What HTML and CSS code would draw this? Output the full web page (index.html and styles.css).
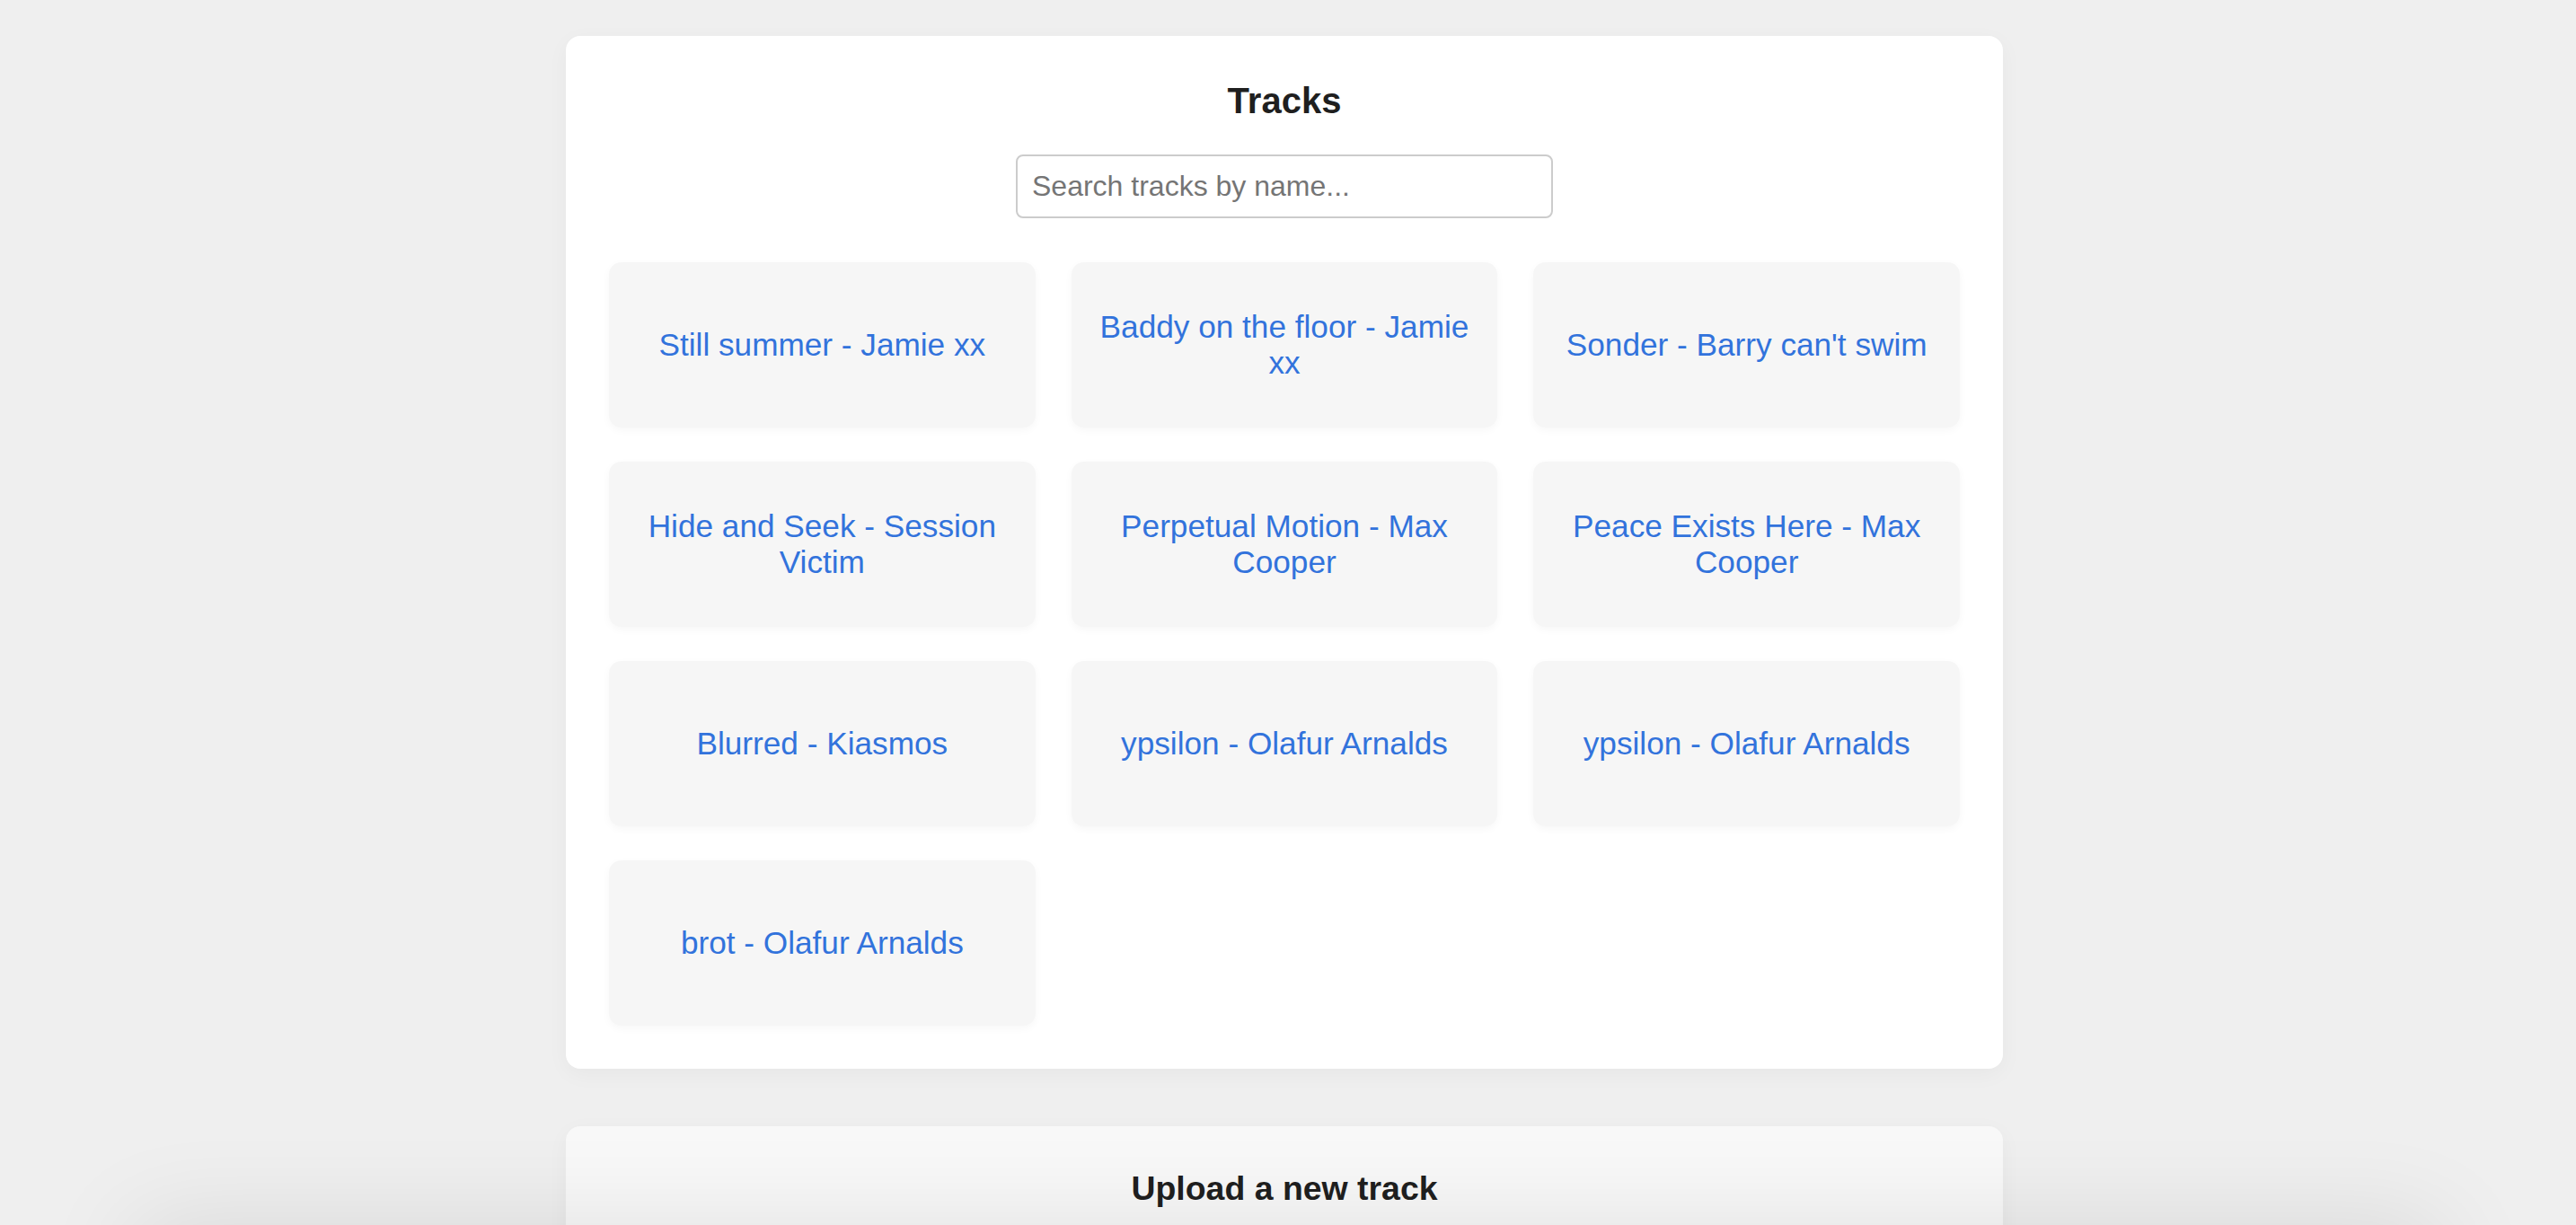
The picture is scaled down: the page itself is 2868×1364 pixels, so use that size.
FILE: index.html
```html
<!DOCTYPE html>
<html lang="en">
<head>
<meta charset="utf-8">
<title>Tracks</title>
<link rel="stylesheet" href="styles.css">
</head>
<body>
<main class="page">
  <section class="panel">
    <h2 class="panel-title">Tracks</h2>
    <div class="search-row">
      <input class="search" type="text" placeholder="Search tracks by name...">
    </div>
    <div class="track-grid">
      <a class="track" href="#">Still summer - Jamie xx</a>
      <a class="track" href="#">Baddy on the floor - Jamie xx</a>
      <a class="track" href="#">Sonder - Barry can't swim</a>
      <a class="track" href="#">Hide and Seek - Session Victim</a>
      <a class="track" href="#">Perpetual Motion - Max Cooper</a>
      <a class="track" href="#">Peace Exists Here - Max Cooper</a>
      <a class="track" href="#">Blurred - Kiasmos</a>
      <a class="track" href="#">ypsilon - Olafur Arnalds</a>
      <a class="track" href="#">ypsilon - Olafur Arnalds</a>
      <a class="track" href="#">brot - Olafur Arnalds</a>
    </div>
  </section>
  <section class="panel panel-upload">
    <h3 class="upload-title">Upload a new track</h3>
  </section>
</main>
<div class="player-shadow"></div>
</body>
</html>
```
FILE: styles.css
```css
html, body {
  margin: 0;
  padding: 0;
}
body {
  background: #efefef;
  font-family: "Liberation Sans", Arial, Helvetica, sans-serif;
  color: #1f1f1f;
  overflow: hidden;
}
.page {
  width: 1600px;
  margin: 0 auto;
  padding-top: 40px;
  display: flex;
  flex-direction: column;
  gap: 64px;
  transform: translateX(-4px);
}
.panel {
  background: #ffffff;
  border-radius: 16px;
  padding: 48px;
  box-shadow: 0 6px 24px rgba(0, 0, 0, 0.04);
}
.panel-title {
  margin: 4px 0 40px;
  font-size: 40px;
  line-height: 40px;
  font-weight: bold;
  text-align: center;
  color: #1f1f1f;
}
.search-row {
  display: flex;
  justify-content: center;
}
.search {
  box-sizing: border-box;
  width: 598px;
  height: 71px;
  padding: 0 16px;
  border: 2px solid #cccccc;
  border-radius: 8px;
  font-family: "Liberation Sans", Arial, Helvetica, sans-serif;
  font-size: 32px;
  color: #333;
  background: #fff;
  outline: none;
}
.search::placeholder {
  color: #757575;
}
.track-grid {
  margin-top: 49px;
  display: grid;
  grid-template-columns: repeat(3, 1fr);
  column-gap: 40px;
  row-gap: 38px;
}
.track {
  box-sizing: border-box;
  height: 184px;
  padding: 0 24px;
  display: flex;
  align-items: center;
  justify-content: center;
  text-align: center;
  background: #f6f6f6;
  border-radius: 14px;
  box-shadow: 0 3px 10px rgba(0, 0, 0, 0.035);
  color: #3273dc;
  font-size: 35.2px;
  text-decoration: none;
}
.panel-upload {
  background: #f8f8f8;
  min-height: 200px;
}
.upload-title {
  margin: 0;
  font-size: 37.44px;
  font-weight: bold;
  text-align: center;
  color: #1f1f1f;
}
.player-shadow {
  position: fixed;
  left: 150px;
  right: 150px;
  top: 100%;
  height: 100px;
  background: #efefef;
  box-shadow: 0 0 110px rgba(0, 0, 0, 0.1);
  z-index: 10;
}
```
